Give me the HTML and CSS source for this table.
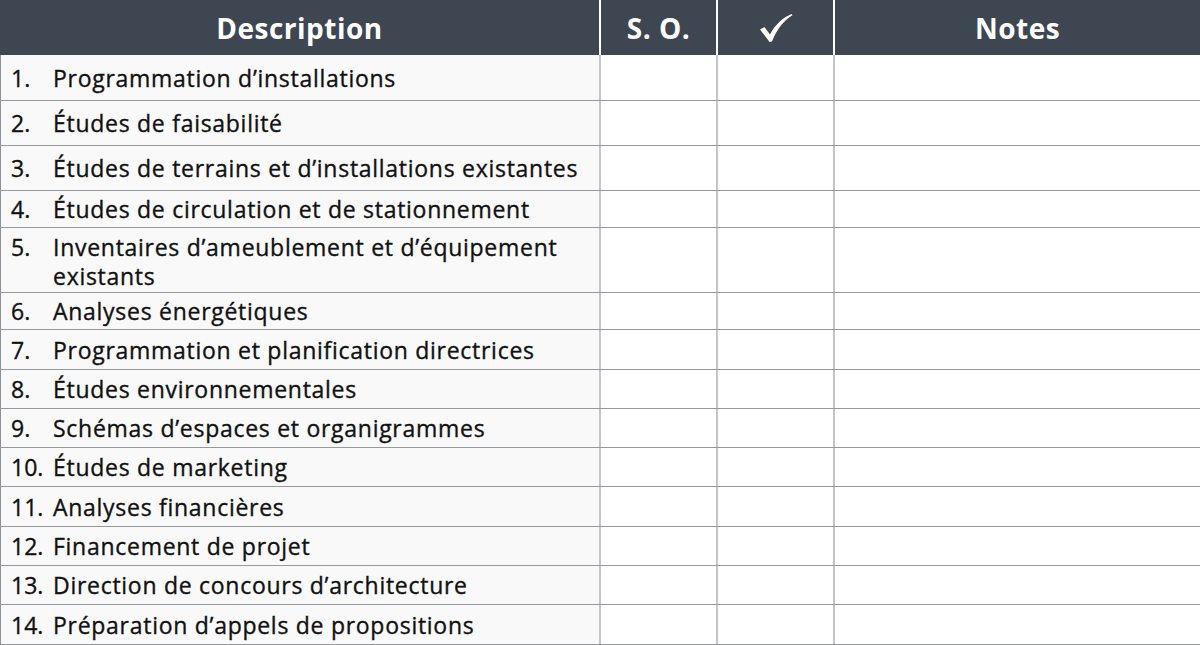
FILE: index.html
```html
<!DOCTYPE html>
<html lang="fr">
<head>
<meta charset="utf-8">
<title>Liste</title>
<link rel="stylesheet" href="styles.css">
</head>
<body>
<div class="table">
  <div class="row head">
    <div class="cell c-desc">Description</div>
    <div class="cell c-so">S. O.</div>
    <div class="cell c-chk">
      <svg class="check" width="34" height="30" viewBox="0 0 34 30"><path d="M1 16.5 L5.5 14 L11 21.5 C16 12 23 5 32.5 1 L33.5 2.3 C25 7.5 18 16 13 28.5 L10.6 29 Z" fill="#fff"/></svg>
    </div>
    <div class="cell c-notes">Notes</div>
  </div>
  <div class="row h46"><div class="cell c-desc"><span class="num">1.</span><span class="txt">Programmation d’installations</span></div><div class="cell c-so"></div><div class="cell c-chk"></div><div class="cell c-notes"></div></div>
  <div class="row h45"><div class="cell c-desc"><span class="num">2.</span><span class="txt">Études de faisabilité</span></div><div class="cell c-so"></div><div class="cell c-chk"></div><div class="cell c-notes"></div></div>
  <div class="row h45"><div class="cell c-desc"><span class="num">3.</span><span class="txt">Études de terrains et d’installations existantes</span></div><div class="cell c-so"></div><div class="cell c-chk"></div><div class="cell c-notes"></div></div>
  <div class="row h37"><div class="cell c-desc"><span class="num">4.</span><span class="txt">Études de circulation et de stationnement</span></div><div class="cell c-so"></div><div class="cell c-chk"></div><div class="cell c-notes"></div></div>
  <div class="row h65"><div class="cell c-desc"><span class="num">5.</span><span class="txt">Inventaires d’ameublement et d’équipement<br>existants</span></div><div class="cell c-so"></div><div class="cell c-chk"></div><div class="cell c-notes"></div></div>
  <div class="row h37"><div class="cell c-desc"><span class="num">6.</span><span class="txt">Analyses énergétiques</span></div><div class="cell c-so"></div><div class="cell c-chk"></div><div class="cell c-notes"></div></div>
  <div class="row h40"><div class="cell c-desc"><span class="num">7.</span><span class="txt">Programmation et planification directrices</span></div><div class="cell c-so"></div><div class="cell c-chk"></div><div class="cell c-notes"></div></div>
  <div class="row h39"><div class="cell c-desc"><span class="num">8.</span><span class="txt">Études environnementales</span></div><div class="cell c-so"></div><div class="cell c-chk"></div><div class="cell c-notes"></div></div>
  <div class="row h39"><div class="cell c-desc"><span class="num">9.</span><span class="txt">Schémas d’espaces et organigrammes</span></div><div class="cell c-so"></div><div class="cell c-chk"></div><div class="cell c-notes"></div></div>
  <div class="row h39"><div class="cell c-desc"><span class="num">10.</span><span class="txt">Études de marketing</span></div><div class="cell c-so"></div><div class="cell c-chk"></div><div class="cell c-notes"></div></div>
  <div class="row h40"><div class="cell c-desc"><span class="num">11.</span><span class="txt">Analyses financières</span></div><div class="cell c-so"></div><div class="cell c-chk"></div><div class="cell c-notes"></div></div>
  <div class="row h39"><div class="cell c-desc"><span class="num">12.</span><span class="txt">Financement de projet</span></div><div class="cell c-so"></div><div class="cell c-chk"></div><div class="cell c-notes"></div></div>
  <div class="row h39"><div class="cell c-desc"><span class="num">13.</span><span class="txt">Direction de concours d’architecture</span></div><div class="cell c-so"></div><div class="cell c-chk"></div><div class="cell c-notes"></div></div>
  <div class="row h40"><div class="cell c-desc"><span class="num">14.</span><span class="txt">Préparation d’appels de propositions</span></div><div class="cell c-so"></div><div class="cell c-chk"></div><div class="cell c-notes"></div></div>
</div>
</body>
</html>
```
FILE: styles.css
```css
html, body {
  margin: 0;
  padding: 0;
  background: #ffffff;
}
body {
  font-family: "Open Sans", "DejaVu Sans", sans-serif;
  color: #111111;
}
.table {
  width: 1200px;
  display: flex;
  flex-direction: column;
}
.row {
  display: grid;
  grid-template-columns: 599px 117px 117px 367px;
  box-sizing: border-box;
  border-bottom: 1px solid #95999e;
}
.row.head {
  height: 55px;
  background: #3d4651;
  border-bottom: none;
  color: #ffffff;
}
.row.head .cell {
  justify-content: center;
  border-left-color: #ffffff;
  font-weight: 700;
  font-size: 28px;
  letter-spacing: 0.5px;
  padding-left: 0;
  padding-top: 1px;
  -webkit-text-stroke: 0;
}
.row.head .c-desc {
  border-left: none;
  background: transparent;
}
.h37 { height: 37px; }
.h39 { height: 39px; }
.h40 { height: 40px; }
.h45 { height: 45px; }
.h46 { height: 46px; }
.h65 { height: 65px; }
.cell {
  box-sizing: border-box;
  display: flex;
  align-items: center;
  border-left: 2px solid #c1c5c9;
  min-width: 0;
}
.c-desc {
  border-left: 1px solid #8e9298;
  background: #f9f9f9;
  padding-left: 10px;
  padding-top: 1px;
  font-size: 23px;
  font-weight: 400;
  letter-spacing: 0.72px;
  line-height: 29px;
  -webkit-text-stroke: 0.35px currentColor;
}
.num {
  width: 42px;
  flex: none;
  letter-spacing: 0;
}
.h65 .num,
.h65 .txt {
  align-self: flex-start;
  margin-top: 4px;
}
.txt {
  white-space: nowrap;
}
.check {
  display: block;
  margin-top: -1px;
}
```
